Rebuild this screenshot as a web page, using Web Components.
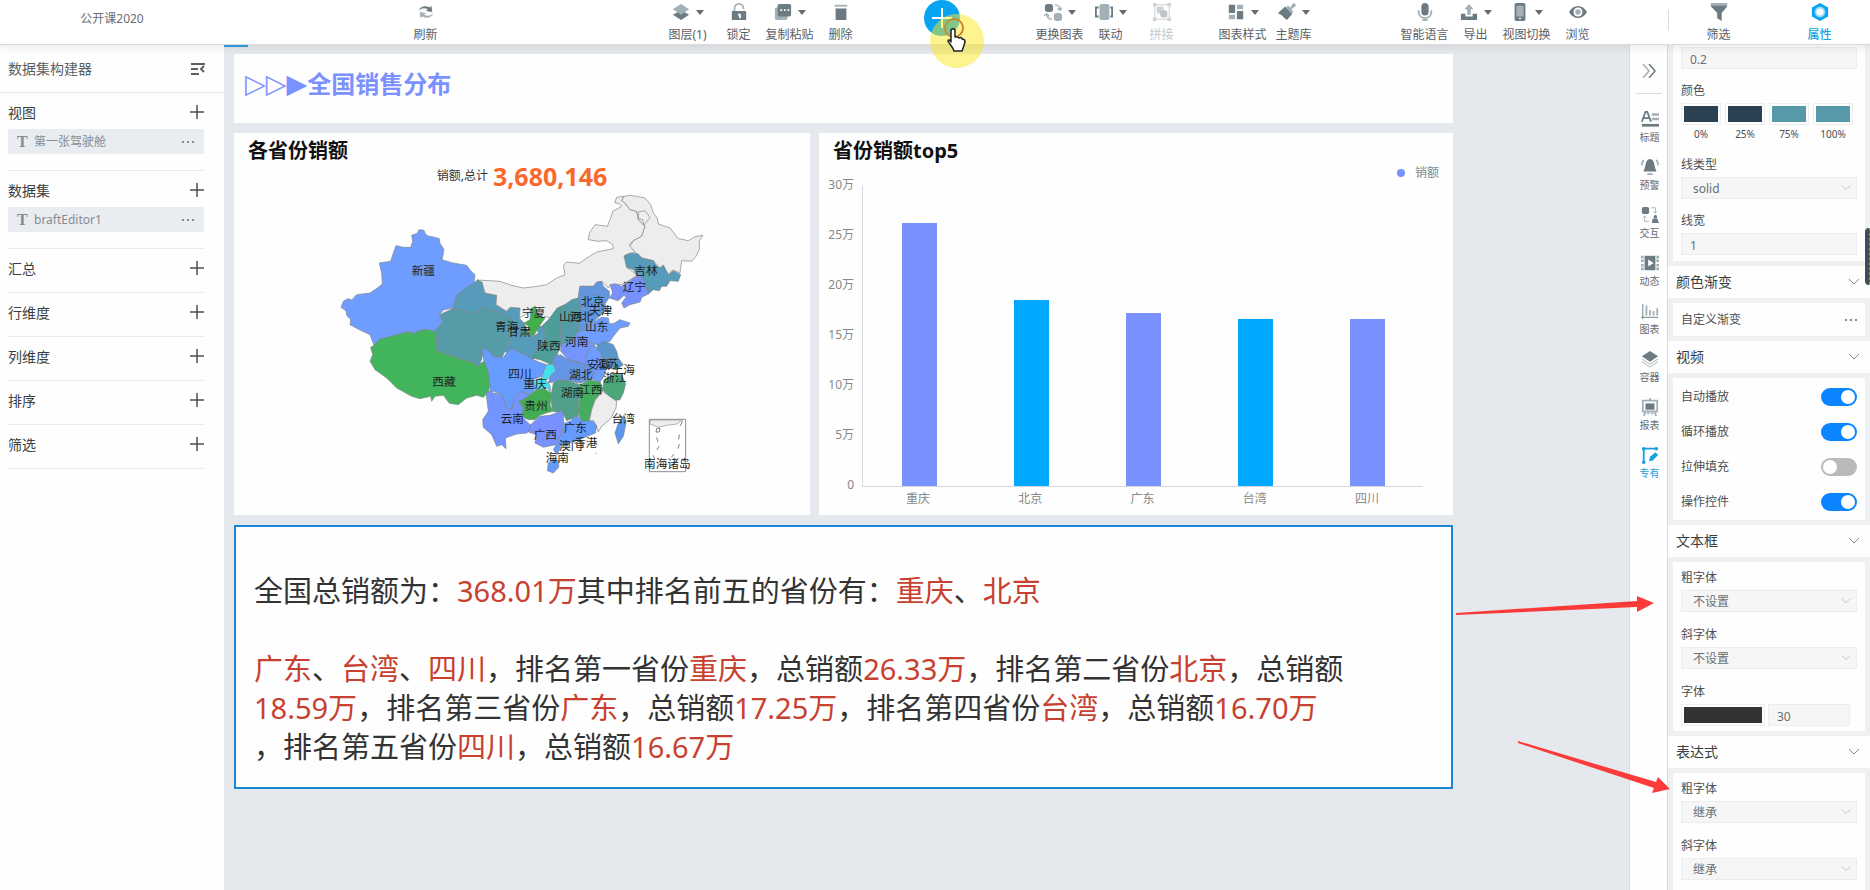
<!DOCTYPE html>
<html lang="zh-CN">
<head>
<meta charset="utf-8">
<title>公开课2020</title>
<style>
  html, body { height: 100%; }
  body {
    margin: 0;
    overflow: hidden;
    font-family: "Noto Sans", "Noto Sans CJK SC", sans-serif;
    font-size: 12px;
    line-height: 16px;
    color: #4c5054;
    background: #e5e8ec;
  }
</style>
</head>
<body>
<dash-app></dash-app>

<script>
const RESET = `
  *, *::before, *::after { box-sizing: border-box; }
  button, input, select { font: inherit; color: inherit; margin: 0; }
  button { border: 0; padding: 0; background: none; cursor: pointer; }
  h1, h2, h3, p, ul { margin: 0; padding: 0; font-weight: inherit; font-size: inherit; list-style: none; }
  svg { display: block; }
`;

const define = (name, css, html) => {
  const tpl = document.createElement('template');
  tpl.innerHTML = `<style>${RESET}${css}</style>${typeof html === 'string' ? html : ''}`;
  customElements.define(name, class extends HTMLElement {
    constructor() {
      super();
      this.attachShadow({ mode: 'open' }).append(tpl.content.cloneNode(true));
    }
    connectedCallback() {
      if (this.done) return;
      this.done = true;
      if (typeof html === 'function') this.shadowRoot.innerHTML += html(this);
    }
  });
};

const D = '#6c7a82', L = '#a3b0b7';
const ICONS = {
  refresh: `<path d="M2 9C3 4 9 2 14 5l2-2 1 7-7-1 2-2C8 5 4 6 2 9z" fill="${D}"/><path d="M18 11c-1 5-7 7-12 4l-2 2-1-7 7 1-2 2c4 2 8 1 10-2z" fill="${L}"/>`,
  layers: `<path d="M10 8l9 5-9 6-9-6z" fill="${D}"/><path d="M10 1l9 6-9 6-9-6z" fill="${L}"/>`,
  lock: `<path d="M5 9V6a5 5 0 0 1 10 0v1" fill="none" stroke="${L}" stroke-width="2"/><rect x="2" y="9" width="16" height="10" rx="1" fill="${D}"/><path d="M9 12h3v5h-2v-3H9z" fill="#fff"/>`,
  copy: `<rect x="1" y="5" width="14" height="14" rx="2" fill="${L}"/><rect x="4" y="1" width="15" height="14" rx="2" fill="${D}"/><path d="M7 7h2v2H7zM11 7h2v2h-2zM15 7h2v2h-2z" fill="#fff"/>`,
  trash: `<rect x="3" y="2" width="14" height="2" fill="${L}"/><path d="M4 6h12v12a1 1 0 0 1-1 1H5a1 1 0 0 1-1-1z" fill="${D}"/>`,
  swap: `<rect x="1" y="1" width="9" height="9" rx="3" fill="${D}"/><rect x="11" y="11" width="9" height="9" rx="3" fill="${L}"/><path d="M12 2c4 0 6 2 6 6M15 6l3 2 2-3M9 18c-4 0-6-2-6-6M0 14l3-2 3 3" fill="none" stroke="${L}" stroke-width="1.500"/>`,
  link: `<rect x="5" y="1" width="11" height="18" rx="2" fill="${L}"/><path d="M4 5H1v10h3M17 5h2v10h-2" fill="none" stroke="${D}" stroke-width="2"/>`,
  splice: `<path d="M2 2h16v16H2z" fill="none" stroke="#c9cdd0"/><path d="M0 0h4v4H0zM16 0h4v4h-4zM0 16h4v4H0zM16 16h4v4h-4z" fill="#ced2d5"/><rect x="4" y="4" width="8" height="8" rx="2" fill="#d0d4d7"/><rect x="8" y="8" width="8" height="8" rx="3" fill="#bfc5c9"/>`,
  tiles: `<path d="M2 2h7v9H2zM11 9h7v9h-7z" fill="${D}"/><path d="M2 13h7v5H2zM11 2h7v5h-7z" fill="${L}"/>`,
  brush: `<path d="M0 11l8-7 8 8-6 7z" fill="${D}"/><path d="M9 5l2-2 3 2 2-4a2 2 0 0 1 3 3l-4 3 2 3-2 2z" fill="${L}"/><path d="M3 13l3 3" stroke="#fff"/>`,
  mic: `<rect x="6" y="0" width="8" height="14" rx="4" fill="${D}"/><path d="M3 8v2c0 9 14 9 14 0V8M10 17v2M7 19h6" fill="none" stroke="${L}" stroke-width="2"/>`,
  upload: `<path d="M1 12h5v3h8v-3h5v7H1z" fill="${D}"/><path d="M10 1l5 6h-3v6H8V7H5z" fill="${L}"/>`,
  phone: `<rect x="4" y="0" width="12" height="20" rx="2" fill="${D}"/><path d="M6 3h8v12H6z" fill="${L}"/><circle cx="10" cy="17" r="1" fill="#fff"/>`,
  eye: `<path d="M0 10C5 1 15 1 20 10 15 19 5 19 0 10z" fill="${D}"/><circle cx="10" cy="10" r="5" fill="#fff"/><circle cx="10" cy="10" r="3" fill="${L}"/>`,
  funnel: `<path d="M1 0h18v4l-6 7v9l-5-3v-6L1 4z" fill="${D}"/><path d="M1 0h18v3H1z" fill="${L}"/>`,
  hex: `<path d="M10 0l9 5v10l-9 5-9-5V5z" fill="#08a4f2"/><circle cx="10" cy="10" r="6" fill="#8fd6fb"/><circle cx="10" cy="10" r="4" fill="#fff"/>`,
  title: `<path d="M1 13L5 2h2l4 11M3 9h6" fill="none" stroke="${D}" stroke-width="2"/><path d="M12 5h8M12 10h8" stroke="${L}" stroke-width="3"/><path d="M1 17h19" stroke="${D}" stroke-width="3"/>`,
  bell: `<path d="M10 1c6 1 4 8 7 13v1H3v-1C6 9 4 2 10 1z" fill="${D}"/><path d="M3 2C1 4 1 6 1 8M17 2c2 2 2 4 2 6M7 18h6" fill="none" stroke="${L}" stroke-width="2"/>`,
  interact: `<rect x="1" y="1" width="8" height="8" rx="2" fill="${D}"/><path d="M11 2h5v6M14 6l2 2 2-2M4 11v6h5M2 13l2-2 2 2" fill="none" stroke="${L}"/><circle cx="16" cy="12" r="2" fill="${D}"/><path d="M12 19l1-5h5l2 5z" fill="${D}"/>`,
  film: `<path d="M4 2h12v16H4z" fill="${D}"/><path d="M0 2h3v3H0zM0 6h3v3H0zM0 11h3v3H0zM0 15h3v3H0zM17 2h3v3h-3zM17 6h3v3h-3zM17 11h3v3h-3zM17 15h3v3h-3z" fill="${L}"/><path d="M8 6l6 4-6 4z" fill="#fff"/>`,
  chart: `<path d="M2 2v17M0 17h19" stroke="${D}" stroke-width="1"/><path d="M6 4v11M10 9v6M14 10v5M18 7v8" stroke="${L}" stroke-width="2"/>`,
  stack: `<path d="M10 1l9 6-9 6-9-6z" fill="${D}"/><path d="M1 10l9 6 9-6M1 13l9 6 9-6" fill="none" stroke="${L}"/>`,
  board: `<path d="M2 3h16v12H2z" fill="none" stroke="${L}" stroke-width="2"/><path d="M5 6h10v7H5z" fill="${D}"/><path d="M10 0v3M5 16l-2 4M15 16l2 4M8 16v2M12 16v2" stroke="${L}" stroke-width="2"/>`,
  special: `<path d="M3 3v14M3 3h14" stroke="#14a0dc" stroke-width="2"/><circle cx="3" cy="3" r="2" fill="#14a0dc"/><circle cx="3" cy="18" r="2" fill="#14a0dc"/><circle cx="17" cy="3" r="2" fill="#14a0dc"/><path d="M9 17l1-5 6-5 3 3-6 6z" fill="#14a0dc"/>`,
};
const icon = (name, size = 20) => `<svg width="${size}" height="${size}" viewBox="0 0 20 20" aria-hidden="true">${ICONS[name]}</svg>`;

/* ---------- top bar ---------- */
define('tool-button', `
  :host { display: block; width: 51px; flex: none; }
  button { width: 100%; display: flex; flex-direction: column; align-items: center; gap: 5px; padding-top: 2px; white-space: nowrap; color: #5c6064; }
  .pic { display: flex; align-items: center; gap: 6px; height: 20px; }
  .caret { border: 4px solid transparent; border-top: 5px solid #666b70; border-bottom: 0; }
  :host([wide]) { width: 50%; }
  :host([off]) button { color: #c3c7ca; }
  :host([active]) button { color: #18a3e0; font-weight: 500; }
`, el => `<button type="button" ${el.hasAttribute('off') ? 'disabled' : ''}>
  <span class="pic">${icon(el.getAttribute('icon'), 18)}${el.hasAttribute('menu') ? '<i class="caret"></i>' : ''}</span>
  <span><slot></slot></span></button>`);

define('top-bar', `
  :host { display: flex; height: 45px; background: #fff; border-bottom: 1px solid #d9dbdc; box-shadow: 0 2px 9px rgba(0,0,0,.09); position: relative; z-index: 2; }
  h1 { width: 224px; text-align: center; line-height: 38px; color: #6a6e72; }
  nav { flex: 1; display: flex; min-width: 0; }
  .group { display: flex; flex: none; }
  .add { flex: none; width: 36px; height: 36px; border-radius: 50%; background: #08a4f2; display: grid; place-items: center; }
  aside { width: 202px; display: flex; position: relative; }
  aside::before { content: ""; position: absolute; left: 0; top: 10px; height: 20px; border-left: 1px solid #d9dbdc; }
`, `
  <h1>公开课2020</h1>
  <nav>
    <span style="flex:176 0 0"></span>
    <tool-button icon="refresh">刷新</tool-button>
    <span style="flex:211 0 0"></span>
    <div class="group">
      <tool-button icon="layers" menu>图层(1)</tool-button>
      <tool-button icon="lock">锁定</tool-button>
      <tool-button icon="copy" menu>复制粘贴</tool-button>
      <tool-button icon="trash">删除</tool-button>
    </div>
    <span style="flex:58 0 0"></span>
    <button class="add" type="button" aria-label="添加"><svg width="24" height="24" viewBox="0 0 24 24"><path d="M12 2v20M2 12h20" stroke="#fff" stroke-width="2"/></svg></button>
    <span style="flex:74 0 0"></span>
    <div class="group">
      <tool-button icon="swap" menu>更换图表</tool-button>
      <tool-button icon="link" menu>联动</tool-button>
      <tool-button icon="splice" off>拼接</tool-button>
    </div>
    <span style="flex:30 0 0"></span>
    <div class="group">
      <tool-button icon="tiles" menu>图表样式</tool-button>
      <tool-button icon="brush" menu>主题库</tool-button>
    </div>
    <span style="flex:80 0 0"></span>
    <div class="group">
      <tool-button icon="mic">智能语言</tool-button>
      <tool-button icon="upload" menu>导出</tool-button>
      <tool-button icon="phone" menu>视图切换</tool-button>
      <tool-button icon="eye">浏览</tool-button>
    </div>
    <span style="flex:65 0 0"></span>
  </nav>
  <aside>
    <tool-button icon="funnel" wide>筛选</tool-button>
    <tool-button icon="hex" wide active>属性</tool-button>
  </aside>
`);

/* ---------- left panel ---------- */
define('data-section', `
  :host { display: block; padding: 6px 0 7px; border-bottom: 1px solid #e8eaec; }
  :host([item]) { padding-bottom: 16px; }
  header { display: flex; align-items: center; justify-content: space-between; height: 28px; margin-bottom: 2px; }
  h3 { font-size: 14px; line-height: 20px; color: #3a3e42; }
  header button { width: 14px; height: 20px; padding-bottom: 2px; }
  .item { display: flex; align-items: center; width: 100%; height: 25px; padding: 0 10px 0 9px; border-radius: 2px; background: #e9edf1; color: #858c92; text-align: left; }
  b { font: bold 16px/25px "Liberation Serif", serif; width: 17px; }
  .name { flex: 1; }
`, el => `
  <header><h3>${el.getAttribute('label')}</h3>
  <button type="button" aria-label="添加${el.getAttribute('label')}"><svg width="14" height="14" viewBox="0 0 14 14"><path d="M7 0v14M0 7h14" stroke="#4c5054" stroke-width="1.500"/></svg></button></header>
  ${el.hasAttribute('item') ? `<button class="item" type="button"><b>T</b><span class="name">${el.getAttribute('item')}</span>
  <svg width="12" height="4" viewBox="0 0 12 4"><path d="M0 1h2v2H0zM5 1h2v2H5zM10 1h2v2h-2z" fill="#858c92"/></svg></button>` : ''}`);

define('data-panel', `
  :host { display: block; background: #fefefe; min-height: 0; }
  .head { display: flex; align-items: center; justify-content: space-between; height: 48px; padding: 0 19px 0 8px; border-bottom: 1px solid #e3e5e7; font-size: 14px; line-height: 20px; color: #5a5e62; }
  .list { padding: 0 20px 0 8px; }
`, `
  <div class="head"><h2>数据集构建器</h2><button type="button" aria-label="收起"><svg width="14" height="12" viewBox="0 0 14 12"><path d="M0 1h14M0 6h7M0 11h8M13 3l-3 3 3 3" fill="none" stroke="#5c6064" stroke-width="2"/></svg></button></div>
  <div class="list">
    <data-section label="视图" item="第一张驾驶舱"></data-section>
    <data-section label="数据集" item="braftEditor1"></data-section>
    <data-section label="汇总"></data-section>
    <data-section label="行维度"></data-section>
    <data-section label="列维度"></data-section>
    <data-section label="排序"></data-section>
    <data-section label="筛选"></data-section>
  </div>
`);

/* ---------- map ---------- */
const GREY = '#ededed';
const PROVINCES = [
  ['#6e9dff', 'M297,155 L312,157 L316,168 L325,174 L345,178 L358,182 L360,196 L372,215 L366,245 L395,254 L440,262 L452,278 L465,290 L462,315 L437,330 L410,352 L398,390 L370,396 L358,410 L370,430 L345,460 L320,455 L300,457 L285,466 L262,462 L215,475 L180,483 L162,502 L150,470 L118,455 L90,440 L92,425 L80,412 L78,398 L63,388 L70,370 L84,362 L95,366 L110,350 L150,345 L175,328 L187,318 L185,285 L178,255 L212,250 L220,225 L228,203 L250,208 L272,208 L278,190 L275,172 L292,166 Z'],
  ['#41b45c', 'M162,502 L180,483 L215,475 L262,462 L285,466 L300,457 L320,455 L345,460 L350,490 L347,515 L380,530 L400,534 L425,545 L450,550 L472,562 L492,550 L505,580 L510,620 L505,642 L490,658 L470,652 L440,660 L415,680 L388,676 L370,652 L345,655 L335,670 L332,655 L300,662 L275,655 L230,630 L200,600 L165,575 L150,550 L158,530 L152,508 Z'],
  ['#559ba8', 'M358,410 L398,392 L440,400 L468,408 L482,390 L530,400 L552,408 L570,420 L590,440 L572,475 L560,510 L545,540 L520,535 L490,512 L485,545 L475,565 L450,550 L425,545 L400,534 L380,530 L347,515 L350,490 L345,460 L370,430 Z'],
  ['#569cba', 'M462,315 L472,306 L486,312 L495,345 L530,352 L528,380 L560,400 L570,388 L600,390 L598,420 L612,435 L625,462 L640,475 L655,465 L648,445 L665,445 L682,475 L675,500 L650,510 L640,545 L615,530 L600,525 L575,512 L560,525 L548,510 L565,500 L572,475 L590,440 L570,420 L552,408 L530,400 L482,390 L468,408 L440,400 L398,392 L410,352 L437,330 Z'],
  [GREY, 'M472,306 L540,310 L575,322 L610,330 L645,326 L680,320 L710,300 L735,290 L730,262 L740,252 L778,256 L800,240 L830,222 L880,212 L878,200 L860,188 L835,190 L805,185 L808,165 L825,140 L862,145 L872,120 L878,100 L905,85 L900,78 L884,74 L890,58 L912,55 L905,68 L915,75 L930,95 L950,100 L955,125 L975,145 L965,175 L940,188 L928,200 L945,222 L915,232 L920,268 L950,290 L940,300 L905,320 L885,318 L870,322 L865,330 L845,310 L820,325 L780,325 L775,360 L735,380 L712,390 L690,420 L675,415 L660,425 L645,385 L625,405 L598,420 L600,390 L570,388 L560,400 L528,380 L530,352 L495,345 L486,312 Z'],
  [GREY, 'M912,55 L930,52 L950,55 L975,60 L992,80 L1000,105 L1012,120 L1015,138 L1050,150 L1075,182 L1105,188 L1125,176 L1148,172 L1138,190 L1138,215 L1128,235 L1115,250 L1085,248 L1080,285 L1058,276 L1045,290 L1030,262 L1020,270 L1000,248 L965,240 L945,222 L930,205 L940,188 L965,175 L975,145 L955,125 L950,100 L930,95 L915,75 L905,68 Z M955,102 L975,98 L990,118 L972,142 L968,125 L956,122 Z'],
  ['#569cba', 'M912,234 L930,225 L955,228 L965,240 L1000,248 L1008,262 L1020,270 L1030,262 L1045,290 L1060,278 L1082,290 L1075,310 L1050,308 L1040,325 L1025,325 L1018,338 L1000,335 L985,348 L975,320 L965,300 L950,290 L940,275 L920,268 Z'],
  ['#7891ff', 'M870,320 L885,318 L905,325 L925,312 L940,300 L960,292 L972,310 L978,330 L985,348 L965,358 L960,372 L930,380 L912,390 L905,375 L918,358 L912,352 L895,368 L868,360 L878,345 Z'],
  ['#6297e0', 'M780,325 L800,325 L820,325 L830,312 L845,310 L850,325 L868,340 L868,358 L855,378 L860,395 L838,415 L815,435 L800,460 L775,460 L780,420 L778,385 L775,360 Z'],
  ['#4fa4f5', 'M818,350 L840,352 L838,372 L820,374 L812,365 Z'],
  ['#6297e0', 'M840,370 L852,378 L850,398 L838,395 Z'],
  ['#6e9dff', 'M775,460 L800,455 L815,435 L845,418 L865,420 L868,438 L882,436 L900,425 L930,435 L925,445 L900,450 L880,475 L870,490 L832,500 L800,490 L770,480 Z'],
  ['#559ba8', 'M735,380 L755,365 L775,360 L782,385 L778,430 L775,460 L755,490 L722,500 L720,450 L725,400 Z'],
  ['#4d9d98', 'M712,390 L735,380 L725,400 L720,450 L722,500 L712,530 L695,560 L660,545 L635,540 L650,510 L675,500 L682,475 L665,445 L690,420 Z'],
  ['#43b04a', 'M632,392 L645,385 L650,410 L675,420 L658,445 L640,475 L632,470 L625,445 L612,435 L630,425 Z'],
  ['#7494ff', 'M722,500 L755,490 L770,465 L775,478 L800,490 L825,500 L808,515 L800,530 L803,565 L775,552 L745,545 L722,520 Z'],
  ['#5a95cc', 'M832,500 L852,490 L880,500 L890,520 L895,540 L910,560 L890,575 L860,570 L850,550 L845,530 L830,518 Z'],
  ['#6e9dff', 'M800,530 L812,505 L825,503 L845,530 L850,550 L860,570 L850,598 L840,612 L808,600 L795,560 Z'],
  ['#6595e4', 'M700,535 L722,530 L745,545 L775,552 L803,565 L825,585 L808,605 L780,615 L745,608 L710,610 L685,615 L690,595 L705,575 L695,560 Z'],
  ['#669bff', 'M485,515 L500,512 L520,535 L548,540 L560,525 L575,512 L600,525 L615,530 L640,545 L665,555 L680,560 L665,595 L640,605 L648,630 L630,650 L605,640 L583,660 L575,695 L560,690 L545,650 L520,640 L510,642 L510,620 L505,580 L492,550 Z'],
  ['#45e0f0', 'M680,560 L700,558 L708,578 L690,595 L678,608 L690,622 L692,640 L680,630 L672,632 L648,635 L640,610 L665,600 L672,578 Z'],
  ['#43ad55', 'M630,650 L648,635 L672,632 L695,645 L690,680 L698,700 L675,706 L660,712 L645,725 L625,725 L605,715 L608,685 L595,672 Z'],
  ['#7494ff', 'M498,645 L510,640 L520,645 L545,650 L560,690 L575,695 L583,660 L605,640 L630,652 L595,672 L610,688 L605,715 L625,735 L640,748 L620,765 L590,768 L556,780 L558,812 L545,800 L530,805 L515,770 L490,748 L488,725 L505,700 Z'],
  ['#4f9f8b', 'M700,615 L715,606 L745,608 L780,620 L775,660 L775,715 L740,728 L728,705 L698,700 L692,660 Z'],
  ['#43ad60', 'M780,620 L808,605 L840,612 L850,635 L825,665 L815,695 L805,735 L782,728 L775,700 Z'],
  ['#4aa878', 'M852,605 L880,588 L905,590 L917,618 L910,645 L900,665 L880,668 L862,650 L848,635 Z'],
  [GREY, 'M848,640 L862,650 L890,670 L888,690 L872,722 L845,745 L835,762 L828,740 L808,732 L815,695 L825,668 Z'],
  ['#7891ff', 'M632,740 L645,728 L660,715 L690,712 L728,698 L732,735 L725,765 L708,800 L670,808 L645,795 L650,770 L625,762 Z'],
  ['#659bff', 'M735,735 L755,728 L760,715 L782,718 L785,730 L820,728 L830,745 L826,765 L790,780 L750,795 L722,805 L712,830 L700,815 L712,795 L725,765 Z'],
  ['#659bff', 'M685,855 L700,845 L716,848 L716,868 L700,885 L682,878 Z'],
  ['#5b97ee', 'M912,712 L918,735 L910,775 L895,797 L885,765 L895,735 Z'],
];
const PLACES = [
  ['新疆', 310, 279], ['西藏', 372, 612], ['青海', 560, 445], ['甘肃', 598, 461], ['宁夏', 641, 404],
  ['陕西', 687, 502], ['山西', 752, 416], ['河北', 784, 416], ['北京', 818, 370], ['天津', 842, 398],
  ['山东', 830, 447], ['河南', 770, 491], ['安徽', 835, 560], ['江苏', 861, 556], ['上海', 910, 575],
  ['浙江', 884, 599], ['湖北', 782, 591], ['湖南', 757, 645], ['江西', 812, 636], ['贵州', 648, 683],
  ['四川', 600, 586], ['重庆', 645, 617], ['云南', 577, 721], ['广西', 676, 771], ['广东', 766, 749],
  ['香港', 797, 793], ['澳门', 752, 803], ['海南', 712, 839], ['台湾', 910, 722], ['吉林', 978, 277],
  ['辽宁', 943, 327], ['南海诸岛', 1042, 858],
];
define('china-map', `
  :host { display: block; }
  svg { width: 400px; height: 298px; margin: 4px auto 0; }
  text { font-size: 35px; fill: #1c1f22; text-anchor: middle; }
`, () => `<svg viewBox="6 36 1200 894" role="img" aria-label="各省份销额地图">
  <g stroke="#7c8388" stroke-width="2" stroke-linejoin="round">${PROVINCES.map(([c, d]) => `<path fill="${c}" d="${d}"/>`).join('')}</g>
  <path d="M988,724 H1097 V881 H988 Z" fill="#fff" stroke="#8a8f93" stroke-width="3"/>
  <path d="M990,726 L1088,726 L1070,738 L1040,742 L1015,748 L990,738 Z" fill="${GREY}" stroke="#8a8f93" stroke-width="2"/>
  <path d="M1088,730 l-8,14 M1010,752 l10,-2 -2,12 -10,0z M1010,778 l4,14 M1018,804 l-8,12 M1078,770 l-2,14 M1078,798 l-4,14 M1062,828 l-8,10 M1000,832 l4,12 M1030,845 l8,8" fill="none" stroke="#7c8388" stroke-width="3"/>
  <circle cx="827" cy="826" r="2" fill="#669bff"/>
  ${PLACES.map(([t, x, y]) => `<text x="${x}" y="${y + 13}">${t}</text>`).join('')}
</svg>`);

/* ---------- bar chart ---------- */
const SALES = [['重庆', 26.33], ['北京', 18.59], ['广东', 17.25], ['台湾', 16.7], ['四川', 16.67]];
define('bar-chart', `
  :host { display: flex; flex-direction: column; color: #85898c; }
  .legend { display: flex; justify-content: flex-end; align-items: center; gap: 10px; height: 13px; padding-right: 14px; }
  .legend i { width: 8px; height: 8px; border-radius: 50%; background: #7891ff; }
  .plot { display: grid; grid-template-columns: 35px 1fr; column-gap: 8px; padding-right: 30px; margin-top: -2px; }
  .ticks { display: flex; flex-direction: column; justify-content: space-between; height: 316px; text-align: right; }
  .bars { display: grid; grid-template-columns: repeat(5, 1fr); justify-items: center; align-items: end; height: 301px; margin-top: 9px; border-left: 1px solid #d5d8da; border-bottom: 1px solid #d5d8da; }
  .bars i { width: 35px; background: #7891ff; }
  .bars i:nth-child(even) { background: #00a8ff; }
  .names { grid-column: 2; display: grid; grid-template-columns: repeat(5, 1fr); text-align: center; margin-top: -2px; }
`, () => `
  <div class="legend"><i></i><span>销额</span></div>
  <div class="plot">
    <div class="ticks">${['30万', '25万', '20万', '15万', '10万', '5万', '0'].map(t => `<span>${t}</span>`).join('')}</div>
    <div class="bars">${SALES.map(([, v]) => `<i style="height:${Math.round(v * 10)}px"></i>`).join('')}</div>
    <div class="names">${SALES.map(([n]) => `<span>${n}</span>`).join('')}</div>
  </div>`);

/* ---------- canvas ---------- */
define('dash-card', `
  :host { display: block; background: #fefefe; min-width: 0; }
  h2 { padding: 3px 14px 0; font-size: 20px; line-height: 30px; font-weight: 700; color: #111; }
`, el => `${el.hasAttribute('heading') ? `<h2>${el.getAttribute('heading')}</h2>` : ''}<slot></slot>`);

define('dash-canvas', `
  :host { display: block; min-width: 0; padding: 9px 176px 0 10px; background: #e5e8ec; position: relative; }
  .tab { position: absolute; left: 0; top: 0; width: 24px; height: 2px; background: #2f97d6; z-index: 3; }
  .board { display: grid; grid-template-columns: 576fr 634fr; gap: 10px 9px; }
  .wide { grid-column: 1 / -1; }
  .title { min-height: 69px; padding: 13px 11px 22px; font-size: 24px; line-height: 34px; font-weight: 700; color: #7b91ff; display: flex; align-items: center; }
  .title span { font: 27px/34px "DejaVu Sans", sans-serif; }
  .chart { min-height: 382px; }
  .total { display: flex; justify-content: center; align-items: center; gap: 5px; height: 20px; margin-bottom: 2px; color: #333; }
  .total strong { font-size: 25px; line-height: 20px; color: #f9682c; }
  .story { min-height: 264px; border: 2px solid #1a86d6; padding: 44px 18px 0; font-size: 29px; line-height: 39px; color: #333; white-space: nowrap; }
  .story p + p { margin-top: 39px; }
  em { font-style: normal; color: #c8402f; }
`, `
  <i class="tab"></i>
  <div class="board">
    <dash-card class="wide title"><span>▷▷▶</span>全国销售分布</dash-card>
    <dash-card class="chart" heading="各省份销额">
      <div class="total"><span>销额,总计</span><strong>3,680,146</strong></div>
      <china-map></china-map>
    </dash-card>
    <dash-card class="chart" heading="省份销额top5"><bar-chart></bar-chart></dash-card>
    <dash-card class="wide story">
      <p>全国总销额为：<em>368.01万</em>其中排名前五的省份有：<em>重庆</em>、<em>北京</em></p>
      <p><em>广东</em>、<em>台湾</em>、<em>四川</em>，排名第一省份<em>重庆</em>，总销额<em>26.33万</em>，排名第二省份<em>北京</em>，总销额<br><em>18.59万</em>，排名第三省份<em>广东</em>，总销额<em>17.25万</em>，排名第四省份<em>台湾</em>，总销额<em>16.70万</em><br>，排名第五省份<em>四川</em>，总销额<em>16.67万</em></p>
    </dash-card>
  </div>
`);

/* ---------- icon rail ---------- */
define('icon-rail', `
  :host { display: block; background: #fefefe; border-left: 1px solid #d9dcdf; border-right: 1px solid #d9dcdf; }
  .more { display: grid; place-items: center; width: 26px; height: 49px; margin: 0 auto; padding-top: 3px; border-bottom: 1px solid #d9dcdf; }
  ul { padding-top: 10px; }
  li button { display: grid; justify-items: center; width: 100%; height: 48px; padding: 5px 0 7px 2px; grid-template-rows: 20px 16px; align-items: center; font-size: 10px; color: #666b70; }
  li.on button { color: #14a0dc; }
`, () => `
  <button class="more" type="button" aria-label="展开"><svg width="14" height="14" viewBox="0 0 14 14"><path d="M1 0l6 7-6 7" fill="none" stroke="${L}" stroke-width="1.500"/><path d="M7 0l6 7-6 7" fill="none" stroke="${D}" stroke-width="1.500"/></svg></button>
  <ul>${[['title', '标题'], ['bell', '预警'], ['interact', '交互'], ['film', '动态'], ['chart', '图表'], ['stack', '容器'], ['board', '报表'], ['special', '专有']]
    .map(([i, t]) => `<li class="${i === 'special' ? 'on' : ''}"><button type="button">${icon(i, 18)}<span>${t}</span></button></li>`).join('')}</ul>`);

/* ---------- property panel ---------- */
const CHEVRON = '<svg class="chev" width="12" height="8" viewBox="0 0 12 8" aria-hidden="true"><path d="M1 1l5 5 5-5" fill="none" stroke="currentColor"/></svg>';
const BOX = `
  .box { display: block; width: 100%; height: 22px; border: 1px solid #ebedef; border-radius: 0; background: #f6f6f7; padding: 2px 8px 0; outline: 0; color: #6a6e72; line-height: 18px; }
`;
define('text-field', `
  :host { display: block; } label { display: block; line-height: 24px; } ${BOX}
`, el => `${el.hasAttribute('label') ? `<label for="c">${el.getAttribute('label')}</label>` : ''}
  <input id="c" class="box" type="text" value="${el.getAttribute('value')}" aria-label="${el.getAttribute('label') || el.getAttribute('hint')}">`);

define('select-field', `
  :host { display: block; } label { display: block; line-height: 24px; } ${BOX}
  .wrap { display: grid; align-items: center; }
  .wrap > * { grid-area: 1 / 1; }
  .box { appearance: none; padding: 2px 11px 0; }
  .chev { justify-self: end; margin-right: 6px; width: 10px; color: #b5b9bc; pointer-events: none; }
`, el => `<label for="c">${el.getAttribute('label')}</label>
  <div class="wrap"><select id="c" class="box"><option>${el.getAttribute('value')}</option></select>${CHEVRON}</div>`);

define('switch-row', `
  :host { display: block; }
  label { display: flex; align-items: center; justify-content: space-between; height: 35px; }
  input { appearance: none; width: 36px; height: 18px; border-radius: 9px; background: #b8babc; padding: 2px; display: flex; cursor: pointer; }
  input::before { content: ""; width: 14px; height: 14px; border-radius: 50%; background: #fff; }
  input:checked { background: #0a84ff; justify-content: flex-end; }
`, el => `<label><span>${el.getAttribute('label')}</span><input type="checkbox" role="switch" ${el.hasAttribute('on') ? 'checked' : ''}></label>`);

define('prop-group', `
  :host { display: block; }
  .bar { display: flex; align-items: center; justify-content: space-between; width: 100%; height: 32px; padding: 0 10px 0 8px; background: #fefefe; font-size: 14px; line-height: 20px; color: #3a3e42; }
  .chev { color: #85898c; }
  .card { margin: 5px; background: #fefefe; padding: 0 8px; }
  :host([bare]) .card { margin-top: 0; }
`, el => `${el.hasAttribute('bare') ? '' : `<button class="bar" type="button">${el.getAttribute('label')}${CHEVRON}</button>`}
  <div class="card"><slot></slot></div>`);

define('prop-panel', `
  :host { display: block; background: #eef0f1; min-height: 0; overflow: hidden; color: #4c5054; }
  .stack { display: grid; gap: 10px; padding: 2px 0 6px; }
  .fields { display: grid; gap: 11px; padding: 4px 0 5px; }
  .switches { padding: 1px 0; }
  .label { line-height: 24px; }
  .colors { display: grid; grid-template-columns: repeat(4, 40px); gap: 0 4px; font-size: 10px; text-align: center; line-height: 18px; }
  .sw { display: block; width: 100%; height: 22px; padding: 2px; border: 1px solid #eceef0; background-clip: content-box; }
  .row { display: flex; align-items: center; justify-content: space-between; height: 33px; }
  .font { display: grid; grid-template-columns: 84px 82px; gap: 3px; }
`, `
  <prop-group bare>
    <div class="stack">
      <text-field hint="透明度" value="0.2"></text-field>
      <div><div class="label">颜色</div>
        <div class="colors">
          <div><button class="sw" type="button" aria-label="色标一" style="background-color:#2b4152"></button>0%</div>
          <div><button class="sw" type="button" aria-label="色标二" style="background-color:#2b4152"></button>25%</div>
          <div><button class="sw" type="button" aria-label="色标三" style="background-color:#5699a8"></button>75%</div>
          <div><button class="sw" type="button" aria-label="色标四" style="background-color:#5699a8"></button>100%</div>
        </div>
      </div>
      <select-field label="线类型" value="solid"></select-field>
      <text-field label="线宽" value="1"></text-field>
    </div>
  </prop-group>
  <prop-group label="颜色渐变">
    <div class="row"><span>自定义渐变</span><button type="button" aria-label="编辑渐变"><svg width="12" height="4" viewBox="0 0 12 4"><path d="M0 1h2v2H0zM5 1h2v2H5zM10 1h2v2h-2z" fill="#85898c"/></svg></button></div>
  </prop-group>
  <prop-group label="视频">
    <div class="switches">
      <switch-row label="自动播放" on></switch-row>
      <switch-row label="循环播放" on></switch-row>
      <switch-row label="拉伸填充"></switch-row>
      <switch-row label="操作控件" on></switch-row>
    </div>
  </prop-group>
  <prop-group label="文本框">
    <div class="fields">
      <select-field label="粗字体" value="不设置"></select-field>
      <select-field label="斜字体" value="不设置"></select-field>
      <div><div class="label">字体</div>
        <div class="font"><button class="sw" type="button" aria-label="字体颜色" style="background-color:#333"></button><text-field hint="字号" value="30"></text-field></div>
      </div>
    </div>
  </prop-group>
  <prop-group label="表达式">
    <div class="fields">
      <select-field label="粗字体" value="继承"></select-field>
      <select-field label="斜字体" value="继承"></select-field>
      <div class="label">&nbsp;</div>
    </div>
  </prop-group>
`);

/* ---------- pointer, arrows and side handle drawn over the page ---------- */
define('screen-marks', `
  :host { position: absolute; inset: 0; pointer-events: none; z-index: 5; overflow: hidden; }
  svg { position: absolute; }
  .arrows { right: 200px; top: 590px; }
  .pointer { left: calc(50% - 6px); top: 13px; }
  .handle { position: absolute; right: 0; top: 228px; width: 5px; height: 57px; border-radius: 4px 0 0 4px; background: #454a58; border-right: 1px dashed #7c9a62; }
`, `
  <svg class="arrows" width="215" height="210" viewBox="0 0 215 210" fill="#fb3b3a">
    <path d="M1 23L182 11V6l17 7-17 9v-5L1 25z"/>
    <path d="M63 151L201 192l2-5 12 12-18 4 2-5L63 153z"/>
  </svg>
  <svg class="pointer" width="56" height="56" viewBox="0 0 56 56">
    <circle cx="28" cy="28" r="27" fill="#fbe920" fill-opacity=".5"/>
    <circle cx="25" cy="15" r="9" fill="none" stroke="#c98a2e" stroke-width="2"/>
    <path d="M22 18c0-3 4-3 4 0v6c2-1 3 0 4 1 2-1 3 0 3 1 2 0 3 1 3 3-1 4-2 6-3 9H25c-1-4-4-6-6-10 0-2 2-1 3 1z" fill="#fff" stroke="#222" stroke-width="1.500" stroke-linejoin="round"/>
  </svg>
  <i class="handle"></i>
`);

define('dash-app', `
  :host { display: grid; grid-template: auto 1fr / 224px 1fr 39px 202px; height: 100vh; overflow: hidden; position: relative; }
  top-bar { grid-column: 1 / -1; }
`, `
  <top-bar></top-bar>
  <data-panel></data-panel>
  <dash-canvas></dash-canvas>
  <icon-rail></icon-rail>
  <prop-panel></prop-panel>
  <screen-marks></screen-marks>
`);
</script>
</body>
</html>
